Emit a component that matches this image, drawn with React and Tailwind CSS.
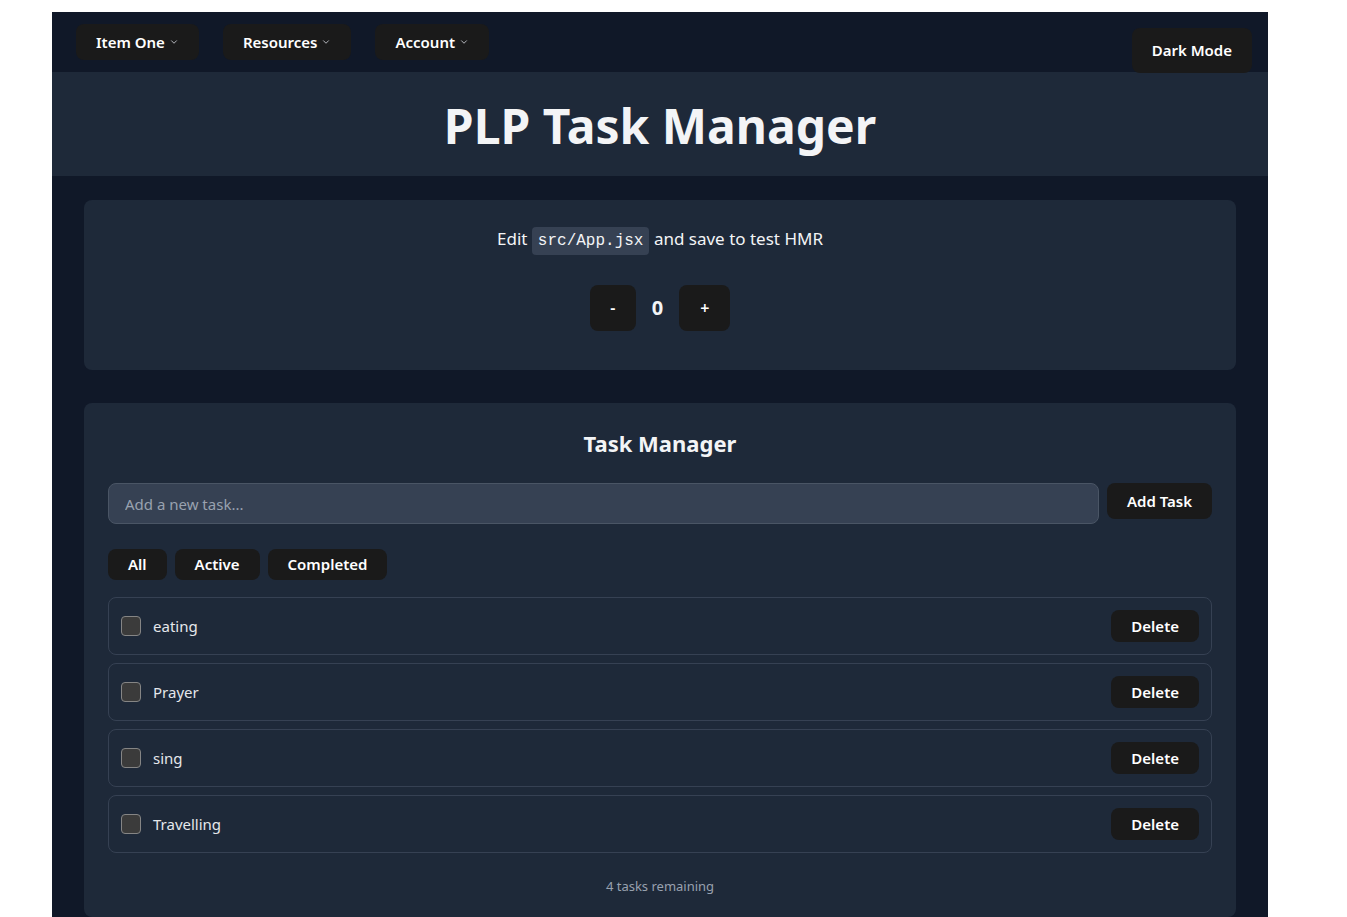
import React, { useState } from "react";
import { ChevronDown } from "lucide-react";

const tasks = [
  { id: 1, text: "eating" },
  { id: 2, text: "Prayer" },
  { id: 3, text: "sing" },
  { id: 4, text: "Travelling" },
];

function NavButton({ label }) {
  return (
    <button className="flex h-9 items-center gap-1 rounded-lg bg-[#1a1a1a] px-5 text-[15px] font-semibold text-white">
      {label}
      <ChevronDown size={10} strokeWidth={2} className="text-gray-300" />
    </button>
  );
}

export default function App() {
  const [count, setCount] = useState(0);

  return (
    <div
      className="min-h-screen bg-white pl-[52px] pt-3"
      style={{ fontFamily: '"Noto Sans", "Open Sans", sans-serif' }}
    >
      <div className="w-[1216px] bg-gray-900">
        {/* barra de navegação */}
        <nav className="flex h-[60px] items-start justify-between pl-6 pr-4">
          <div className="mt-3 flex gap-6">
            <NavButton label="Item One" />
            <NavButton label="Resources" />
            <NavButton label="Account" />
          </div>
          <button className="mt-4 h-[45px] rounded-lg bg-[#1a1a1a] px-5 text-[15px] font-semibold text-white">
            Dark Mode
          </button>
        </nav>

        <header className="flex h-[104px] items-center justify-center bg-gray-800 pt-1">
          <h1 className="text-5xl font-bold text-gray-100">PLP Task Manager</h1>
        </header>

        <main className="px-8 pt-6">
          <section className="rounded-lg bg-gray-800 pb-[39px] pt-6 text-center">
            <p className="text-[17px] leading-[29px] text-gray-100">
              Edit{" "}
              <code
                className="rounded bg-gray-700 px-1.5 py-[5px] text-base"
                style={{ fontFamily: '"Liberation Mono", monospace' }}
              >
                src/App.jsx
              </code>{" "}
              and save to test HMR
            </p>
            <div className="mt-8 flex items-center justify-center gap-4">
              <button
                onClick={() => setCount(count - 1)}
                className="h-[46px] w-[46px] rounded-lg bg-[#1a1a1a] text-base font-semibold text-white"
              >
                -
              </button>
              <span className="text-xl font-bold text-gray-100">{count}</span>
              <button
                onClick={() => setCount(count + 1)}
                className="h-[46px] w-[51px] rounded-lg bg-[#1a1a1a] text-base font-semibold text-white"
              >
                +
              </button>
            </div>
          </section>

          <section className="mt-[33px] rounded-lg bg-gray-800 px-6 pb-5 pt-6">
            <h2 className="text-center text-[22px] leading-8 font-bold text-gray-100">Task Manager</h2>

            <div className="mt-6 flex items-start gap-2">
              <input
                placeholder="Add a new task..."
                className="h-[41px] flex-1 rounded-lg border border-gray-600 bg-gray-700 px-4 text-[15px] text-gray-100 placeholder:text-gray-400"
              />
              <button className="h-9 rounded-lg bg-[#1a1a1a] px-5 text-[15px] font-semibold text-white">
                Add Task
              </button>
            </div>

            <div className="mt-[25px] flex gap-2">
              {["All", "Active", "Completed"].map((f) => (
                <button
                  key={f}
                  className="h-[31px] rounded-lg bg-[#1a1a1a] px-5 text-[15px] font-semibold text-white"
                >
                  {f}
                </button>
              ))}
            </div>

            <ul className="mt-[17px] flex flex-col gap-2">
              {tasks.map((t) => (
                <li
                  key={t.id}
                  className="flex h-[58px] items-center justify-between rounded-lg border border-gray-700 px-3"
                >
                  <div className="flex items-center gap-3">
                    <span className="h-5 w-5 rounded-sm border border-[#858585] bg-[#3b3b3b]" />
                    <span className="text-[15px] text-gray-200">{t.text}</span>
                  </div>
                  <button className="h-8 rounded-lg bg-[#1a1a1a] px-5 text-[15px] font-semibold text-white">
                    Delete
                  </button>
                </li>
              ))}
            </ul>

            <p className="mt-6 text-center text-[13px] text-gray-400">4 tasks remaining</p>
          </section>
        </main>
      </div>
    </div>
  );
}
